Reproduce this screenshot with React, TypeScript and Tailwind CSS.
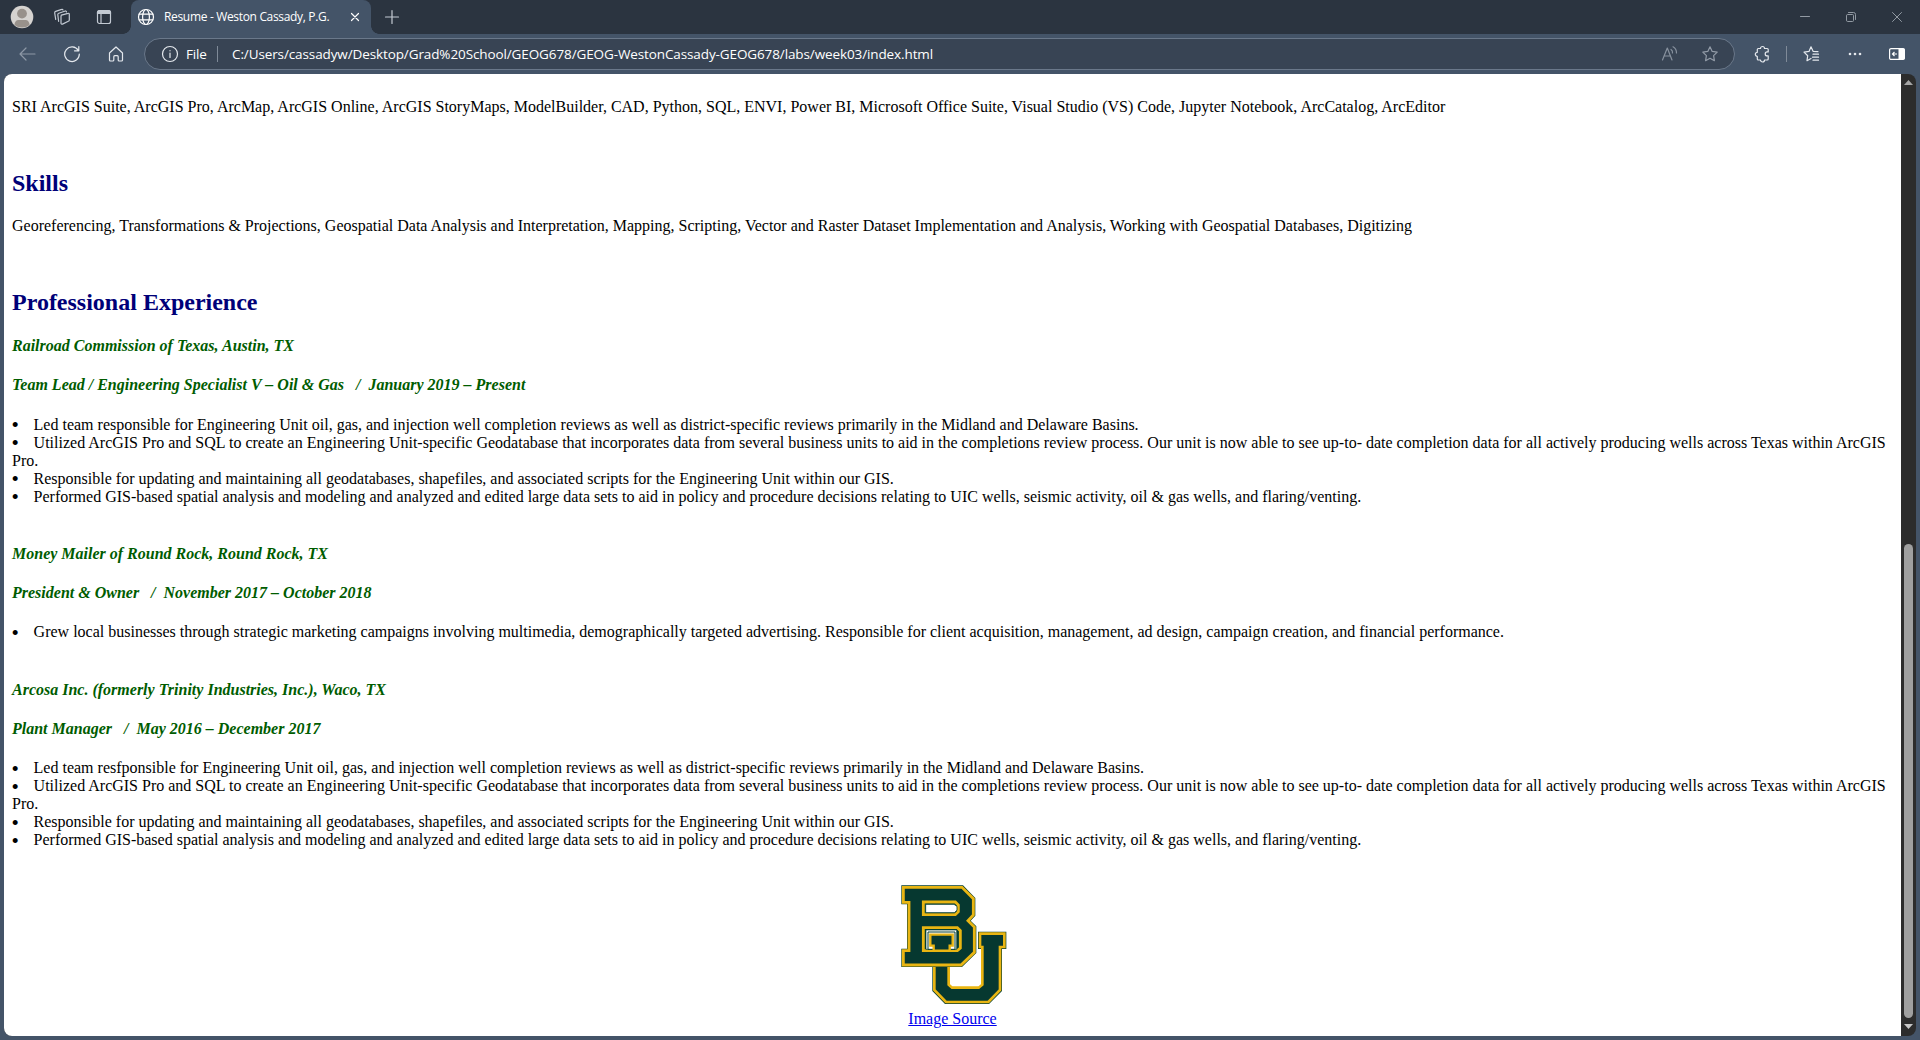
import React from "react";

const I = (p: { w: number; h: number; className?: string; children: React.ReactNode }) => (
  <svg width={p.w} height={p.h} viewBox={`0 0 ${p.w} ${p.h}`} fill="none" stroke="currentColor" strokeWidth="1.2" strokeLinecap="round" strokeLinejoin="round" className={`block shrink-0 ${p.className ?? ""}`}>
    {p.children}
  </svg>
);

function TabBar() {
  return (
    <div className="flex h-[34px] items-stretch bg-[#2b3440] text-[#c3cad3]">
      <div className="flex w-[131px] items-center pl-[10px]">
        <svg width="24" height="24" viewBox="0 0 24 24" className="block shrink-0">
          <defs>
            <clipPath id="avatar"><circle cx="12" cy="12" r="11.2" /></clipPath>
          </defs>
          <circle cx="12" cy="12" r="11.3" fill="#d6d3d0" />
          <g clipPath="url(#avatar)" fill="#98918b">
            <circle cx="12" cy="8.6" r="4.9" />
            <path d="M4.500 20c0-3 1.500-5 4-5h7c2.500 0 4 2 4 5-2 1.700-4.500 2.500-7.500 2.500S6.500 21.700 4.500 20z" />
          </g>
        </svg>
        <I w={18} h={18} className="ml-[19px]">
          <path d="M8.300 7.200 15 5.300a1 1 0 0 1 1.300 1v5.600a1.500 1.500 0 0 1-1 1.400l-5.800 2.800a1 1 0 0 1-1.500-.9V8.500z" />
          <path d="M5.600 13.300 4.800 6.700a1.500 1.500 0 0 1 1-1.500L12.300 3a1 1 0 0 1 1.200.800" />
          <path d="M2.700 11.300 1.700 5a1.500 1.500 0 0 1 1-1.600L8.700 1.400a1 1 0 0 1 1.300.500" />
        </I>
        <I w={16} h={16} className="ml-[25px]">
          <rect x="1.500" y="1.500" width="13" height="13" rx="2" />
          <path d="M1.500 3.500a2 2 0 0 1 2-2h9a2 2 0 0 1 2 2v1h-13z" fill="currentColor" />
          <path d="M5 5v9.500" />
        </I>
      </div>
      <div className="relative flex w-[240px] items-center rounded-t-[8px] bg-[#445468] pl-[6px] text-white">
        <span className="absolute bottom-0 -left-2 h-2 w-2 bg-[radial-gradient(circle_at_0_0,transparent_7.500px,#445468_8px)]" />
        <span className="absolute bottom-0 -right-2 h-2 w-2 bg-[radial-gradient(circle_at_100%_0,transparent_7.500px,#445468_8px)]" />
        <I w={18} h={18}>
          <circle cx="9" cy="9" r="7.500" />
          <ellipse cx="9" cy="9" rx="3.400" ry="7.500" />
          <path d="M2.200 6.200h13.600M2.200 11.800h13.600" />
        </I>
        <span className="ml-[9px] w-[176px] whitespace-nowrap font-['Open_Sans',sans-serif] text-[12px] tracking-[-0.33px]">Resume - Weston Cassady, P.G.</span>
        <I w={12} h={12} className="ml-[9px]"><path d="m2.500 2.500 7 7m0-7-7 7" /></I>
      </div>
      <div className="flex flex-1 items-center pl-[13px]">
        <I w={16} h={16}><path d="M8 1.500v13M1.500 8h13" /></I>
      </div>
      <div className="flex items-center pr-[17px] text-[#929aa3]">
        <I w={12} h={12}><path d="M1.500 5.500h9" strokeWidth="1" /></I>
        <I w={12} h={12} className="ml-[34px]">
          <path d="M1.500 4.500a1 1 0 0 1 1-1h5a1 1 0 0 1 1 1v5a1 1 0 0 1-1 1h-5a1 1 0 0 1-1-1zM3.500 1.500h5a2 2 0 0 1 2 2v5" strokeWidth="1" />
        </I>
        <I w={12} h={12} className="ml-[34px]"><path d="m1.500 1.500 9 9m0-9-9 9" strokeWidth="1" /></I>
      </div>
    </div>
  );
}

function AddressBar() {
  return (
    <div className="flex h-10 items-center text-[#e4e8ed]">
      <I w={18} h={18} className="ml-[18px] text-[#8d98a6]"><path d="M17 9H2M8 3 2 9l6 6" /></I>
      <I w={18} h={18} className="ml-[27px]"><path d="M15.300 5.500A7.300 7.300 0 1 0 16.300 9M15.800 1.500v4.300h-4.300" /></I>
      <I w={16} h={18} className="ml-[27px]">
        <path d="M1.500 8 8 2l6.500 6v7a1 1 0 0 1-1 1h-2.300a1 1 0 0 1-1-1v-3.300a1 1 0 0 0-1-1H6.800a1 1 0 0 0-1 1V15a1 1 0 0 1-1 1H2.500a1 1 0 0 1-1-1z" />
      </I>
      <div className="ml-[20px] flex h-8 w-[1591px] items-center rounded-full border border-[#6a788a] bg-[#384454] pl-[16px] font-['Open_Sans',sans-serif] text-[13.500px] text-white">
        <I w={18} h={18} className="text-[#e4e8ed]"><circle cx="9" cy="9" r="7.500" /><path d="M9 8v4.500M9 5.500v.3" /></I>
        <span className="ml-[7px] w-[22px] tracking-[-0.2px]">File</span>
        <span className="ml-[9px] h-4 w-px bg-[#7f8a98]" />
        <span className="ml-[14px] flex-1 whitespace-nowrap tracking-[-0.11px]">C:/Users/cassadyw/Desktop/Grad%20School/GEOG678/GEOG-WestonCassady-GEOG678/labs/week03/index.html</span>
        <I w={18} h={18} className="text-[#87919e]"><path d="m1.500 15 4.800-12L11 15M3.200 11h6.200M10 4.500a3.500 3.500 0 0 1 1.500 3.500M12 1.800A7 7 0 0 1 15.500 8" /></I>
        <I w={18} h={18} className="ml-[22px] mr-[15px] text-[#929ba7]"><path d="m9 1.800 2.200 4.600 5 .7-3.600 3.600.8 5L9 13.300l-4.400 2.400.8-5L1.800 7.100l5-.7z" /></I>
      </div>
      <I w={18} h={18} className="ml-[18px]">
        <path d="M5.300 3.500h2.200a2 2 0 0 1 4 0h2.700a1 1 0 0 1 1 1v2.400h-1a2 2 0 0 0 0 4h1V14a1 1 0 0 1-1 1h-2.700a2 2 0 0 1-4 0H5.300a1 1 0 0 1-1-1v-2.700a2 2 0 0 1 0-4V4.500a1 1 0 0 1 1-1z" />
      </I>
      <span className="ml-[15px] h-4 w-px bg-[#7f8a98]" />
      <I w={18} h={18} className="ml-[15px]">
        <path d="M5 15.700 5.700 10.700 2 7.100l5-.7L9 1.800l2.200 4.600 4.800.2M5 15.700l4-2.200M11 9.200h5.500M10.500 12.200h6M11 15.200h5.500" />
      </I>
      <svg width="16" height="4" viewBox="0 0 16 4" className="ml-[27px] block" fill="currentColor"><circle cx="3" cy="2" r="1.300" /><circle cx="8" cy="2" r="1.300" /><circle cx="13" cy="2" r="1.300" /></svg>
      <svg width="18" height="14" viewBox="0 0 18 14" className="ml-[25px] block">
        <rect x="1.600" y="1.600" width="14.800" height="10.800" rx="1.500" fill="none" stroke="#fff" strokeWidth="1.200" />
        <path d="M10.500 1.500h5.500l.8 1v9l-.8 1h-5.500z" fill="#fff" />
        <path d="M9 7H4.500M6.500 5l-2 2 2 2" fill="none" stroke="#fff" strokeWidth="1.200" />
      </svg>
    </div>
  );
}

const H2 = ({ children }: { children: React.ReactNode }) => (
  <h2 className="mt-[19.92px] mb-[19.92px] text-[24px] leading-[27px] font-bold text-[#000078]">{children}</h2>
);
const H4 = ({ children }: { children: React.ReactNode }) => (
  <h4 className="my-[21.28px] leading-[18px] font-bold whitespace-pre text-[#005c00] italic">{children}</h4>
);
const Points = ({ items }: { items: string[] }) => (
  <div className="mb-[18px]">
    {items.map((t) => (
      <div key={t}>
        <span className="relative top-[2.500px] -left-[0.5px] inline-block w-[21.6px] text-[21px] leading-[0]">•</span>
        {t}
      </div>
    ))}
  </div>
);

const common = [
  "Utilized ArcGIS Pro and SQL to create an Engineering Unit-specific Geodatabase that incorporates data from several business units to aid in the completions review process. Our unit is now able to see up-to- date completion data for all actively producing wells across Texas within ArcGIS Pro.",
  "Responsible for updating and maintaining all geodatabases, shapefiles, and associated scripts for the Engineering Unit within our GIS.",
  "Performed GIS-based spatial analysis and modeling and analyzed and edited large data sets to aid in policy and procedure decisions relating to UIC wells, seismic activity, oil & gas wells, and flaring/venting.",
];

const U = "M149 186H221V238H206V345L216 352H296L306 345V238H294V186H379V238H366V364L327 403H195L157 364V238H149Z";
const B = "M64 47H249L286 85V138L272 153L289 170V250L246 292H64V237H81V104H64Z";

function Logo() {
  return (
    <svg width="120" height="120" viewBox="39 46 360 360" className="mx-auto block" strokeLinejoin="miter">
      <path d={U} fill="#063f31" />
      <path d="M155 192H213V232H206V345L216 354H296L307 345V232H300V192H373V232H360V361L325 397H198L163 361V232H155Z" fill="#063830" stroke="#e9b512" strokeWidth="8" />
      <path d={B} fill="#063f31" />
      <path d="M70 53H246L280 87V136L264 153L283 172V248L243 286H70V243H87V98H70Z" fill="#063830" stroke="#e9b512" strokeWidth="8.500" />
      <path d="M130 97H226L235 106V126L226 135H130Z" fill="#063f31" stroke="#e9b512" strokeWidth="8.500" />
      <path d="M137 104H222L231 110V122L223 129H137Z" fill="#fff" stroke="#063f31" strokeWidth="2.500" />
      <path d="M130 174H232L241 183V235L232 243H130Z" fill="#063f31" stroke="#e9b512" strokeWidth="8.500" />
      <path d="M138 181H230V239H138Z" fill="#fff" stroke="#063f31" strokeWidth="2" />
      <path d="M144 187H225V239H144Z" fill="#fff" stroke="#063f31" strokeWidth="3" />
      <path d="M151 195H218V228H209V243H161V228H151Z" fill="#063830" stroke="#e9b512" strokeWidth="7" />
    </svg>
  );
}

export default function App() {
  return (
    <div className="flex h-[1040px] w-[1920px] flex-col overflow-hidden bg-[#445468]">
      <TabBar />
      <AddressBar />
      <div className="mr-1 mb-1 ml-1 flex min-h-0 flex-1 overflow-hidden rounded-[8px] bg-[#2c2c2c]">
        <main className="w-[1897px] overflow-hidden bg-white px-2 pt-[24px] font-['Liberation_Serif',serif] text-[16px] leading-[18px] text-black">
          <p className="mb-[34px]">SRI ArcGIS Suite, ArcGIS Pro, ArcMap, ArcGIS Online, ArcGIS StoryMaps, ModelBuilder, CAD, Python, SQL, ENVI, Power BI, Microsoft Office Suite, Visual Studio (VS) Code, Jupyter Notebook, ArcCatalog, ArcEditor</p>
          <div className="flow-root"><H2>Skills</H2></div>
          <p className="mb-[34px]">Georeferencing, Transformations &amp; Projections, Geospatial Data Analysis and Interpretation, Mapping, Scripting, Vector and Raster Dataset Implementation and Analysis, Working with Geospatial Databases, Digitizing</p>
          <div className="flow-root">
            <H2>Professional Experience</H2>
            <H4>Railroad Commission of Texas, Austin, TX</H4>
            <H4>{"Team Lead / Engineering Specialist V – Oil & Gas   /  January 2019 – Present"}</H4>
            <Points items={["Led team responsible for Engineering Unit oil, gas, and injection well completion reviews as well as district-specific reviews primarily in the Midland and Delaware Basins.", ...common]} />
          </div>
          <div className="flow-root">
            <H4>Money Mailer of Round Rock, Round Rock, TX</H4>
            <H4>{"President & Owner   /  November 2017 – October 2018"}</H4>
            <Points items={["Grew local businesses through strategic marketing campaigns involving multimedia, demographically targeted advertising. Responsible for client acquisition, management, ad design, campaign creation, and financial performance."]} />
          </div>
          <div className="flow-root">
            <H4>Arcosa Inc. (formerly Trinity Industries, Inc.), Waco, TX</H4>
            <H4>{"Plant Manager   /  May 2016 – December 2017"}</H4>
            <Points items={["Led team resfponsible for Engineering Unit oil, gas, and injection well completion reviews as well as district-specific reviews primarily in the Midland and Delaware Basins.", ...common]} />
          </div>
          <div className="mt-[18px] text-center">
            <Logo />
            <a className="mt-[5px] inline-block text-[#0000ee] underline">Image Source</a>
          </div>
        </main>
        <div className="flex w-[15px] flex-col items-center">
          <svg width="9" height="5" viewBox="0 0 9 5" className="mt-[6px] block shrink-0"><path d="M4.500 0 9 5H0z" fill="#a5a5a5" /></svg>
          <div className="mt-[459px] h-[474px] w-[9px] shrink-0 rounded-full bg-[#9f9f9f]" />
          <svg width="9" height="5" viewBox="0 0 9 5" className="mt-[6px] block shrink-0"><path d="M0 0h9L4.500 5z" fill="#c8c8c8" /></svg>
        </div>
      </div>
    </div>
  );
}
